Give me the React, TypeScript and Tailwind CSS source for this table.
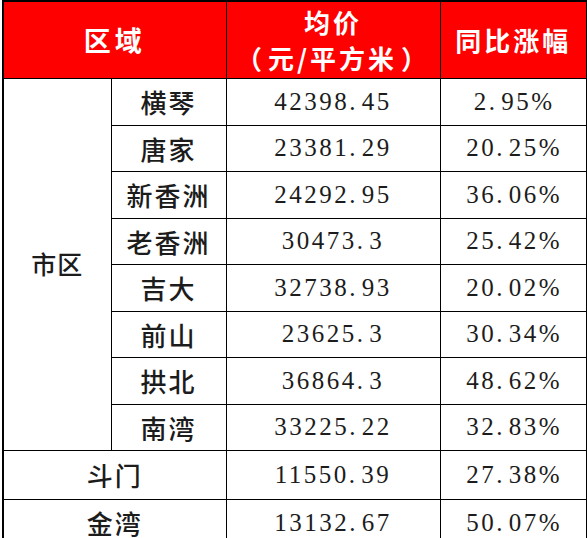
const rows: { name: string; price: string; rate: string; h: string }[] = [
  { name: "横琴", price: "42398.45", rate: "2.95%", h: "h-[47px]" },
  { name: "唐家", price: "23381.29", rate: "20.25%", h: "h-[46px]" },
  { name: "新香洲", price: "24292.95", rate: "36.06%", h: "h-[47px]" },
  { name: "老香洲", price: "30473.3", rate: "25.42%", h: "h-[46px]" },
  { name: "吉大", price: "32738.93", rate: "20.02%", h: "h-[47px]" },
  { name: "前山", price: "23625.3", rate: "30.34%", h: "h-[46px]" },
  { name: "拱北", price: "36864.3", rate: "48.62%", h: "h-[47px]" },
  { name: "南湾", price: "33225.22", rate: "32.83%", h: "h-[46px]" },
];

const cjk = "font-['Noto_Sans_CJK_SC',sans-serif]";
const serif = "font-['Liberation_Serif','Noto_Sans_CJK_SC',serif] text-[25px] tracking-[2.5px]";
const cell = "border border-black text-center align-middle p-0";

// 数字按宋体那样等宽排，小数点占一个数字的宽
function Num({ value }: { value: string }) {
  const [a, b] = value.split(".");
  return (
    <span className="whitespace-nowrap">
      {a}
      {b !== undefined && (
        <>
          <span className="inline-block w-[12.5px] text-left">.</span>
          {b}
        </>
      )}
    </span>
  );
}

export default function App() {
  return (
    <div className="w-[587px] h-[538px] bg-white overflow-hidden">
      <table className="ml-[2px] w-[584px] table-fixed border-collapse border-2 border-black text-[#1c1c1c]">
        <colgroup>
          <col className="w-[108px]" />
          <col className="w-[115px]" />
          <col className="w-[214px]" />
          <col className="w-[147px]" />
        </colgroup>
        <thead>
          <tr className="h-[77px] bg-[#fe0000] text-white">
            <th colSpan={2} className={`${cell} ${cjk} text-[27px] font-bold tracking-[4px]`}>
              区域
            </th>
            <th className={`${cell} ${cjk} text-[26px] font-bold leading-[36px]`}>
              <div className="tracking-[3px]">均价</div>
              <div className="whitespace-nowrap">
                <span className="inline-block w-[16px] text-left indent-[-16px]">（</span>
                <span className="tracking-[3px]">元/平方米</span>
                <span className="inline-block w-[17px] text-left indent-[4px]">）</span>
              </div>
            </th>
            <th className={`${cell} ${cjk} text-[26px] font-bold tracking-[3px]`}>
              同比涨幅
            </th>
          </tr>
        </thead>
        <tbody>
          {rows.map((r, i) => (
            <tr key={r.name} className={r.h}>
              {i === 0 && (
                <td rowSpan={8} className={`${cell} ${cjk} text-[25px] font-medium tracking-[1px]`}>
                  市区
                </td>
              )}
              <td className={`${cell} ${cjk} text-[26px] font-medium tracking-[2px]`}>{r.name}</td>
              <td className={`${cell} ${serif}`}>
                <Num value={r.price} />
              </td>
              <td className={`${cell} ${serif} pl-[2px]`}>
                <Num value={r.rate} />
              </td>
            </tr>
          ))}
          <tr className="h-[49px]">
            <td colSpan={2} className={`${cell} ${cjk} text-[26px] font-medium tracking-[2px]`}>
              斗门
            </td>
            <td className={`${cell} ${serif}`}>
              <Num value="11550.39" />
            </td>
            <td className={`${cell} ${serif} pl-[2px]`}>
              <Num value="27.38%" />
            </td>
          </tr>
          <tr className="h-[48px]">
            <td colSpan={2} className={`${cell} ${cjk} text-[26px] font-medium tracking-[2px]`}>
              金湾
            </td>
            <td className={`${cell} ${serif}`}>
              <Num value="13132.67" />
            </td>
            <td className={`${cell} ${serif} pl-[2px]`}>
              <Num value="50.07%" />
            </td>
          </tr>
        </tbody>
      </table>
    </div>
  );
}
